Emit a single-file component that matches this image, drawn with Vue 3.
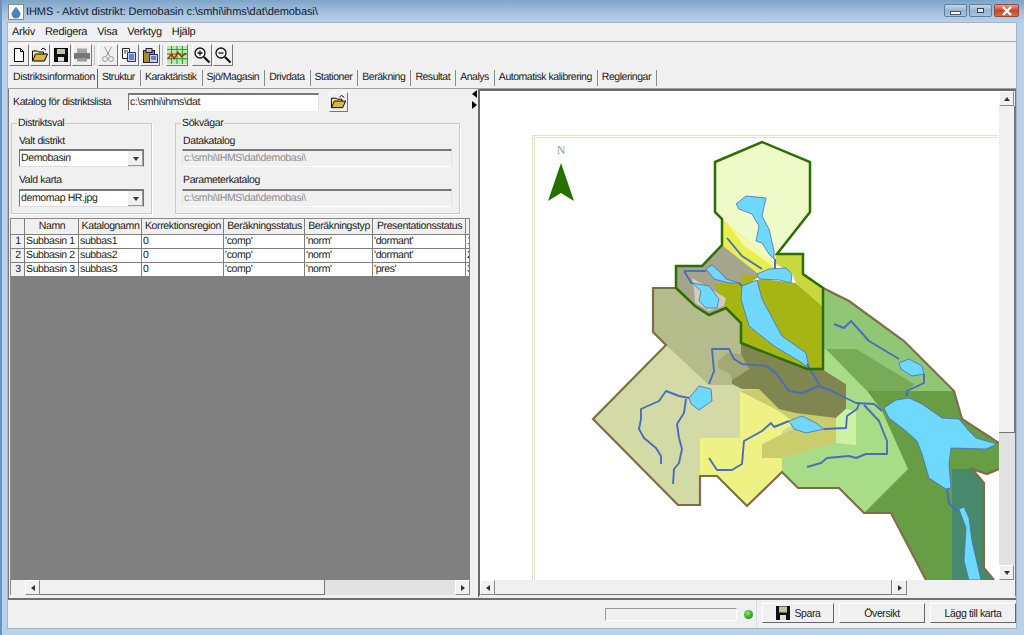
<script setup>
const menus = ['Arkiv', 'Redigera', 'Visa', 'Verktyg', 'Hjälp']
const tabs = ['Struktur', 'Karaktäristik', 'Sjö/Magasin', 'Drivdata', 'Stationer', 'Beräkning', 'Resultat', 'Analys', 'Automatisk kalibrering', 'Regleringar']
const columns = ['', 'Namn', 'Katalognamn', 'Korrektionsregion', 'Beräkningsstatus', 'Beräkningstyp', 'Presentationsstatus', '']
const rows = [
  ['1', 'Subbasin 1', 'subbas1', '0', "'comp'", "'norm'", "'dormant'", '1'],
  ['2', 'Subbasin 2', 'subbas2', '0', "'comp'", "'norm'", "'dormant'", '2'],
  ['3', 'Subbasin 3', 'subbas3', '0', "'comp'", "'norm'", "'pres'", '3']
]

// map areas, drawn back to front, in screen coordinates
const areas = [
  ['#d4daa6', '654,287 825,288 850,300 905,340 955,390 963,418 1000,442 1000,468 988,473 973,468 985,482 985,567 995,579 927,579 892,513 865,512 840,487 799,487 783,471 748,505 718,475 701,475 701,504 679,504 594,418 667,344 654,331'],
  ['#b5bc8c', '654,287 724,287 742,320 742,345 750,362 733,379 733,384 710,384 667,344 654,331'],
  ['#eef285', '741,390 780,410 800,420 783,430 783,471 748,505 718,475 701,475 701,437 741,437'],
  ['#cacd6c', '741,390 760,388 780,408 837,417 837,442 783,457 763,457 763,443 800,425 780,410'],
  ['#a3a874', '719,360 728,352 742,353 750,368 733,379 731,373 719,367'],
  ['#7f8650', '733,379 750,368 742,353 742,342 808,368 823,368 847,383 847,408 837,417 797,412 780,408 760,388 743,388 733,383'],
  ['#a9dc86', '825,340 867,390 883,410 909,468 865,512 840,487 799,487 783,471 783,457 837,442 837,417 847,408 847,383 825,368'],
  ['#cdf2a4', '837,417 847,408 857,410 857,444 837,442'],
  ['#8fc775', '825,288 850,300 905,340 955,390 868,390 827,348 825,348'],
  ['#77ab58', '827,348 857,348 915,383 910,390 868,390'],
  ['#679d45', '868,390 955,390 963,418 1000,442 1000,468 988,473 973,468 985,482 985,567 995,579 927,579 892,513 865,512 909,468 883,410'],
  ['#46896c', '953,468 973,468 985,482 985,567 995,579 953,579'],
  ['#eefbc9', '716,161 763,141 811,161 811,211 778,253 775,262 723,218 716,211'],
  ['#e9ef4c', '723,218 775,262 775,270 762,275 723,244'],
  ['#f4f7ac', '730,225 775,262 775,266 745,245'],
  ['#a5a58c', '723,244 762,275 745,285 727,307 710,314 696,305 677,287 677,265 703,265'],
  ['#a6b514', '715,283 745,283 762,278 797,282 824,306 824,368 808,368 742,342 742,322 727,307'],
  ['#a6b514', '742,273 757,275 752,283 742,282'],
  ['#c9d83c', '778,253 804,253 804,273 824,287 824,306 797,282 793,272 775,262'],
  ['#cfcfb8', '693,277 727,297 725,305 710,310 696,302 695,288']
]
const lakes = [
  '885,407 897,399 910,397 923,403 943,417 960,418 970,430 977,437 998,443 987,448 952,447 950,463 952,487 947,488 930,477 923,453 918,440 907,430 890,417',
  '960,508 965,506 970,517 973,540 982,579 970,579 965,560 967,527',
  '900,362 910,358 923,365 925,373 913,375 902,368',
  '790,420 803,415 817,422 825,428 807,432 795,428',
  '690,397 700,385 712,388 713,400 700,409 692,403',
  '737,203 747,195 767,197 763,215 770,228 775,250 775,258 770,253 763,242 757,240 760,225 753,213 740,208',
  '743,285 758,279 763,298 783,335 807,352 810,367 800,360 775,345 750,325 742,298',
  '758,273 770,268 787,267 793,273 792,282 780,279 760,278',
  '707,268 713,264 722,272 727,278 740,282 730,282 715,278',
  '693,282 710,285 720,298 718,307 707,307 700,300 702,290'
]
const rivers = [
  '690,397 680,395 667,390 660,400 642,408 642,418 640,428 645,437 657,447 662,455 662,463',
  '687,398 685,412 678,423 680,437 683,448 680,462 675,468 674,483',
  '710,383 715,370 713,348 730,348 735,358 743,363 767,365 777,372 790,390 803,392 820,385 833,390 857,402 875,403 883,410',
  '808,363 820,383',
  '710,457 718,469 733,469 743,463 745,440 763,430 772,422 775,426 790,420',
  '825,428 847,427 848,415 858,408 860,403',
  '865,404 880,420 888,440 888,453 867,453 857,457 850,455 828,457 822,462 808,466',
  '835,323 845,327 852,320 870,340 900,358',
  '925,373 925,382 908,390 908,395',
  '948,488 950,503 960,511',
  '728,237 743,255 763,268',
  '685,270 707,270',
  '685,270 693,283',
  '740,282 743,285',
  '776,258 776,268'
]
</script>

<template>
  <div class="window">
    <header class="titlebar">
      <svg class="app-icon" width="16" height="16" viewBox="0 0 16 16">
        <rect x="0.5" y="0.5" width="15" height="15" fill="#fff" stroke="#8a8a8a" />
        <path d="M8 2.500C6 6 3.500 7.500 3.500 10a4.500 4.500 0 0 0 9 0C12.500 7.500 10 6 8 2.500z" fill="#4d84bb" />
      </svg>
      <span class="title-text">IHMS - Aktivt distrikt: Demobasin c:\smhi\ihms\dat\demobasi\</span>
      <div class="caption-buttons">
        <div class="caption min"><i class="min-glyph"></i></div>
        <div class="caption max"><i class="max-glyph"></i></div>
        <div class="caption close">
          <svg width="12" height="10" viewBox="0 0 12 10"><path d="M2 1l8 8M10 1l-8 8" stroke="#fff" stroke-width="2.400" /></svg>
        </div>
      </div>
    </header>

    <div class="client">
      <nav class="menubar">
        <span v-for="m in menus" :key="m" class="menu">{{ m }}</span>
      </nav>

      <div class="toolbar">
        <button class="tool">
          <svg width="16" height="16" viewBox="0 0 16 16"><path d="M3.500 1.500h6l3 3v10h-9z" fill="#fff" stroke="#000" /><path d="M9.500 1.500v3h3" fill="none" stroke="#000" /></svg>
        </button>
        <button class="tool">
          <svg width="18" height="16" viewBox="0 0 18 16"><path d="M1.500 14V4h5l1 1h5v2" fill="#ffe680" stroke="#000" /><path d="M1.500 14l3-7h12l-3 7z" fill="#d8b840" stroke="#000" /><path d="M10 3l2-2 3 2" fill="none" stroke="#000" /></svg>
        </button>
        <button class="tool">
          <svg width="16" height="16" viewBox="0 0 16 16"><rect x="1.500" y="1.500" width="13" height="13" fill="#111" stroke="#000" /><rect x="4" y="2" width="8" height="5" fill="#b9c9a0" /><rect x="5" y="10" width="6" height="4.500" fill="#ddd" /></svg>
        </button>
        <button class="tool">
          <svg width="18" height="16" viewBox="0 0 18 16"><rect x="4" y="1.500" width="10" height="5" fill="#a5a5a5" /><rect x="1" y="6" width="16" height="6" rx="1" fill="#777" /><rect x="4" y="11" width="10" height="3.500" fill="#999" /></svg>
        </button>
        <i class="tool-sep"></i>
        <button class="tool">
          <svg width="14" height="18" viewBox="0 0 14 18"><path d="M3.500 1l5 9M10.500 1l-5 9" stroke="#9a9a9a" fill="none" /><circle cx="4" cy="13" r="2.500" fill="none" stroke="#9a9a9a" /><circle cx="10" cy="13" r="2.500" fill="none" stroke="#9a9a9a" /></svg>
        </button>
        <button class="tool">
          <svg width="16" height="16" viewBox="0 0 16 16"><path d="M1.500 1.500h7v10h-7z" fill="#fff" stroke="#222" /><path d="M6.500 5.500h8v9h-8z" fill="#c5cff0" stroke="#223080" /><path d="M3 4h4M3 6h2M8 8h5M8 10h5M8 12h5" stroke="#223080" /></svg>
        </button>
        <button class="tool">
          <svg width="17" height="17" viewBox="0 0 17 17"><rect x="1.500" y="3.500" width="11" height="12" fill="#a58a3c" stroke="#222" /><rect x="4" y="1.500" width="6" height="4" fill="#bbb" stroke="#222" /><rect x="7.500" y="7.500" width="8" height="8" fill="#c5cff0" stroke="#223080" /><path d="M9 10h5M9 12h5" stroke="#223080" /></svg>
        </button>
        <i class="tool-sep"></i>
        <button class="tool chart">
          <svg width="22" height="20" viewBox="0 0 22 20">
            <rect width="22" height="20" fill="#bfe7b0" />
            <path d="M0 4h22M0 9h22M0 14h22M5 0v20M11 0v20M17 0v20" stroke="#22a833" stroke-width="1.200" />
            <path d="M1 14l4-5 3 5 4-7 4 5 5-4" fill="none" stroke="#d81818" stroke-width="1.600" />
          </svg>
        </button>
        <button class="tool after-chart">
          <svg width="18" height="18" viewBox="0 0 18 18"><circle cx="7" cy="7" r="5" fill="#f2f2f2" stroke="#111" stroke-width="1.300" /><path d="M11 11l5.500 5.500" stroke="#111" stroke-width="2.200" /><path d="M4.500 7h5M7 4.500v5" stroke="#111" stroke-width="1.300" /></svg>
        </button>
        <button class="tool">
          <svg width="18" height="18" viewBox="0 0 18 18"><circle cx="7" cy="7" r="5" fill="#f2f2f2" stroke="#111" stroke-width="1.300" /><path d="M11 11l5.500 5.500" stroke="#111" stroke-width="2.200" /><path d="M4.500 7h5" stroke="#111" stroke-width="1.300" /></svg>
        </button>
      </div>

      <div class="tabstrip">
        <span class="tab active">Distriktsinformation</span>
        <span v-for="t in tabs" :key="t" class="tab">{{ t }}</span>
      </div>

      <main class="content">
        <section class="left">
          <div class="catalog-row">
            <label class="catalog-label">Katalog för distriktslista</label>
            <div class="sunken catalog-input">c:\smhi\ihms\dat</div>
            <button class="tool browse">
              <svg width="18" height="16" viewBox="0 0 18 16"><path d="M1.500 14V4h5l1 1h5v2" fill="#ffe680" stroke="#000" /><path d="M1.500 14l3-7h12l-3 7z" fill="#d8b840" stroke="#000" /><path d="M10 3l2-2 3 2" fill="none" stroke="#000" /></svg>
            </button>
          </div>

          <div class="groups">
            <fieldset class="group district">
              <legend>Distriktsval</legend>
              <div class="field-label">Valt distrikt</div>
              <div class="sunken combo"><span>Demobasin</span><i class="combo-btn"><i class="arrow down"></i></i></div>
              <div class="field-label second">Vald karta</div>
              <div class="sunken combo"><span>demomap HR.jpg</span><i class="combo-btn"><i class="arrow down"></i></i></div>
            </fieldset>
            <fieldset class="group paths">
              <legend>Sökvägar</legend>
              <div class="field-label">Datakatalog</div>
              <div class="sunken disabled">c:\smhi\IHMS\dat\demobasi\</div>
              <div class="field-label second">Parameterkatalog</div>
              <div class="sunken disabled">c:\smhi\IHMS\dat\demobasi\</div>
            </fieldset>
          </div>

          <div class="grid">
            <div class="grid-row head">
              <div v-for="(c, i) in columns" :key="i" class="cell">{{ c }}</div>
            </div>
            <div v-for="r in rows" :key="r[0]" class="grid-row">
              <div v-for="(c, i) in r" :key="i" class="cell" :class="{ rowhead: i === 0 }">{{ c }}</div>
            </div>
            <div class="grid-empty"></div>
            <div class="grid-scroll">
              <div class="corner"></div>
              <div class="hscroll">
                <i class="sbtn"><i class="arrow left-a"></i></i>
                <div class="thumb" style="width: 285px"></div>
                <div class="track"></div>
                <i class="sbtn"><i class="arrow right-a"></i></i>
              </div>
            </div>
          </div>
        </section>

        <div class="splitter">
          <i class="split-arrow to-left"></i>
          <i class="split-arrow to-right"></i>
        </div>

        <section class="map-pane">
          <div class="map-top">
            <svg class="map" width="519" height="489" viewBox="481 90 519 489">
              <rect x="481" y="90" width="519" height="489" fill="#fff" />
              <path d="M1000 134.500H533.500V579M1000 136.500H535.500V579" fill="none" stroke="#e2e2cf" stroke-width="1.200" />
              <text x="562" y="153" text-anchor="middle" class="north">N</text>
              <polygon points="562,162 575,200 562,192 549,200" fill="#267000" />
              <polygon v-for="(a, i) in areas" :key="i" :points="a[1]" :fill="a[0]" />
              <path d="M677 287H654V331L667 344L594 418L679 504H701V475H718L748 505L783 471L799 487H840L865 512H892L927 579M995 579L985 567V482L973 468L988 473L1000 468M1000 442L963 418L955 390L905 340L850 300L824 287" fill="none" stroke="#7d6e4a" stroke-width="2.200" />
              <polygon v-for="(l, i) in lakes" :key="'l' + i" :points="l" fill="#6fd8ff" stroke="#4a6cc0" stroke-width="0.800" stroke-linejoin="round" />
              <polyline v-for="(r, i) in rivers" :key="'r' + i" :points="r" fill="none" stroke="#4a6cc0" stroke-width="1.900" stroke-linejoin="round" />
              <polygon points="716,161 763,141 811,161 811,211 778,253 804,253 804,273 824,287 824,368 808,368 742,342 742,322 727,307 710,314 696,305 677,287 677,265 703,265 723,244 723,218 716,211" fill="none" stroke="#2c6e00" stroke-width="2.500" />
            </svg>
            <div class="vscroll">
              <i class="sbtn"><i class="arrow up"></i></i>
              <div class="thumb v-thumb"></div>
              <div class="track"></div>
              <i class="sbtn"><i class="arrow down"></i></i>
            </div>
          </div>
          <div class="map-bottom">
            <div class="hscroll">
              <i class="sbtn"><i class="arrow left-a"></i></i>
              <div class="thumb"></div>
              <div class="track map-track"></div>
              <i class="sbtn"><i class="arrow right-a"></i></i>
            </div>
            <div class="scroll-corner"></div>
          </div>
        </section>
      </main>

      <footer class="statusbar">
        <div class="status-left">
          <div class="progress"></div>
          <i class="led"></i>
        </div>
        <div class="status-buttons">
          <button class="push save">
            <svg width="16" height="16" viewBox="0 0 16 16"><rect x="1" y="1" width="14" height="14" fill="#111" /><rect x="4" y="1.500" width="8" height="6" fill="#b9c9a0" /><rect x="5" y="10" width="6" height="5" fill="#ddd" /></svg>
            Spara
          </button>
          <button class="push wide">Översikt</button>
          <button class="push wide">Lägg till karta</button>
        </div>
      </footer>
    </div>
  </div>
</template>

<style scoped>
.window {
  width: 1024px;
  height: 635px;
  box-sizing: border-box;
  overflow: hidden;
  display: flex;
  flex-direction: column;
  background: #b9d1ea;
  border-left: 2px solid #6c93bd;
  font-family: "Liberation Sans", Arial, sans-serif;
  font-size: 10.500px;
  letter-spacing: -0.37px;
  text-rendering: geometricPrecision;
  color: #1a1a1a;
}
.titlebar {
  height: 23px;
  flex: none;
  margin-left: -2px;
  padding-left: 8px;
  display: flex;
  align-items: center;
  background: linear-gradient(#7ea4c9, #a8c3de 60%, #bad1e8);
}
.app-icon {
  margin-right: 2px;
}
.title-text {
  font-size: 11px;
  letter-spacing: -0.08px;
  color: #10202c;
}
.caption-buttons {
  margin-left: auto;
  margin-right: 5px;
  margin-top: -2px;
  display: flex;
  gap: 2px;
}
.caption {
  height: 13px;
  width: 23px;
  box-sizing: border-box;
  border: 1px solid #5f7f9f;
  border-radius: 2px;
  display: flex;
  align-items: center;
  justify-content: center;
  background: linear-gradient(#c6d9ea, #97b5d0 50%, #a8c4dd);
}
.caption.close {
  width: 25px;
  background: linear-gradient(#e4a08a, #c9452d 50%, #d7694e);
  border-color: #8f4a3c;
}
.min-glyph {
  width: 9px;
  height: 2px;
  margin-top: 5px;
  background: #fff;
  outline: 1px solid #44596d;
}
.max-glyph {
  width: 7px;
  height: 5px;
  box-sizing: border-box;
  border: 1.500px solid #33475a;
  background: #dbe7f1;
}
.client {
  flex: 1;
  margin: 0 8px 7px 6px;
  min-height: 0;
  background: #f0f0f0;
  display: flex;
  flex-direction: column;
  box-shadow: 0 0 0 1px #a0b5ca;
}
.menubar {
  height: 19px;
  flex: none;
  padding-left: 4px;
  display: flex;
  gap: 10px;
  align-items: center;
  border-bottom: 1px solid #a8a8a8;
  box-sizing: border-box;
}
.menu {
  font-size: 11px;
  letter-spacing: -0.3px;
}
.toolbar {
  height: 26px;
  flex: none;
  padding: 2px 0 2px 1px;
  box-sizing: border-box;
  display: flex;
  align-items: stretch;
  gap: 1px;
}
.tool {
  width: 20px;
  height: 22px;
  padding: 0;
  box-sizing: border-box;
  background: #f0f0f0;
  border: 1px solid;
  border-color: #fff #777 #777 #fff;
  display: flex;
  align-items: center;
  justify-content: center;
}
.tool.chart {
  width: 22px;
}
.tool.after-chart {
  margin-left: 3px;
}
.tool-sep {
  width: 1px;
  margin: 1px 2px 1px 1px;
  background: #c0c0c0;
}
.tabstrip {
  height: 20px;
  flex: none;
  padding-left: 2px;
  display: flex;
  align-items: flex-end;
}
.tab {
  padding: 0 5px 0 4px;
  height: 16px;
  line-height: 15px;
  margin-bottom: 2px;
  border-right: 1px solid #888;
  letter-spacing: -0.47px;
  white-space: nowrap;
}
.tab.active {
  height: 19px;
  line-height: 17px;
  margin-bottom: 0;
  border-right: 1px solid #666;
  padding: 0 2px 0 3px;
  letter-spacing: -0.37px;
}
.content {
  flex: 1;
  min-height: 0;
  display: flex;
  border-top: 1px solid #a0a0a0;
}
.left {
  width: 463px;
  flex: none;
  display: flex;
  flex-direction: column;
  padding: 0 0 3px 1px;
  border-left: 1px solid #7a7a7a;
  box-sizing: border-box;
}
.catalog-row {
  height: 28px;
  flex: none;
  display: flex;
  align-items: center;
  padding-left: 3px;
}
.catalog-label {
  width: 115px;
  flex: none;
  margin-top: -2px;
}
.sunken {
  box-sizing: border-box;
  background: #fff;
  border: 1px solid;
  border-color: #777 #e0e0e0 #fff #777;
  border-width: 2px 1px 1px 1px;
  height: 18px;
  line-height: 15px;
  padding-left: 1px;
}
.catalog-input {
  width: 191px;
  margin-right: 10px;
  margin-top: -3px;
}
.browse {
  width: 19px;
  height: 20px;
  margin-top: -3px;
}
.groups {
  height: 101px;
  flex: none;
  display: flex;
  align-items: flex-start;
  padding-left: 1px;
  gap: 23px;
}
.group {
  margin: 0;
  box-sizing: border-box;
  height: 97px;
  padding: 0 7px;
  border: 1px solid #c9c9c9;
  box-shadow: 1px 1px 0 #fff;
}
.group legend {
  padding: 0 1px;
  margin-left: -2px;
  line-height: 12px;
}
.district {
  width: 141px;
}
.paths {
  width: 285px;
}
.field-label {
  height: 14px;
  line-height: 14px;
  margin-top: 5px;
}
.field-label.second {
  margin-top: 6px;
}
.combo {
  display: flex;
  align-items: center;
  justify-content: space-between;
  margin-top: 1px;
  width: 125px;
  height: 18px;
  border-color: #777 #777 #ddd #777;
}
.combo-btn {
  width: 15px;
  height: 15px;
  display: flex;
  align-items: center;
  justify-content: center;
  background: #f0f0f0;
  border-left: 1px solid #fff;
  box-shadow: inset -1px -1px 0 #999;
}
.disabled {
  margin-top: 1px;
  margin-left: -1px;
  background: #f0f0f0;
  color: #8d8d8d;
  width: 270px;
  border-color: #777 #e4e4e4 #fff #e4e4e4;
}
.field-label.second + .sunken {
  margin-top: 2px;
}
.arrow {
  width: 0;
  height: 0;
  display: block;
  border: 3px solid transparent;
}
.arrow.down {
  border-top: 4px solid #333;
  border-bottom: 0;
}
.arrow.up {
  border-bottom: 4px solid #333;
  border-top: 0;
}
.arrow.left-a {
  border-right: 4px solid #333;
  border-left: 0;
}
.arrow.right-a {
  border-left: 4px solid #333;
  border-right: 0;
}
.grid {
  flex: 1;
  min-height: 0;
  width: 460px;
  display: flex;
  flex-direction: column;
  border-top: 1px solid #888;
  border-left: 1px solid #888;
  box-sizing: border-box;
}
.grid-row {
  flex: none;
  height: 14px;
  display: grid;
  grid-template-columns: 14px 54px 63px 82px 81px 68px 93px 1fr;
  background: #fff;
  overflow: hidden;
}
.grid-row.head {
  height: 16px;
  background: #f0f0f0;
}
.cell {
  box-sizing: border-box;
  border-right: 1px solid #7f7f7f;
  border-bottom: 1px solid #7f7f7f;
  padding-left: 1px;
  line-height: 13px;
  white-space: nowrap;
  overflow: hidden;
}
.head .cell {
  text-align: center;
  line-height: 15px;
}
.rowhead {
  background: #f0f0f0;
  text-align: center;
}
.grid-empty {
  flex: 1;
  background: #808080;
}
.grid-scroll {
  height: 15px;
  flex: none;
  display: flex;
}
.corner {
  width: 14px;
  background: #f0f0f0;
}
.hscroll {
  flex: 1;
  display: flex;
  height: 15px;
}
.sbtn {
  width: 15px;
  height: 15px;
  flex: none;
  box-sizing: border-box;
  display: flex;
  align-items: center;
  justify-content: center;
  background: #f0f0f0;
  border: 1px solid;
  border-color: #fff #888 #888 #fff;
}
.thumb {
  flex: none;
  box-sizing: border-box;
  background: #f0f0f0;
  border-right: 1px solid #777;
  border-bottom: 1px solid #777;
}
.track {
  flex: 1;
  background: #e2e2e2;
}
.splitter {
  width: 7px;
  flex: none;
  padding-top: 1px;
}
.split-arrow {
  display: block;
  width: 0;
  height: 0;
  margin-bottom: 3px;
  border: 4px solid transparent;
}
.to-left {
  border-right: 5px solid #000;
  border-left: 0;
  margin-left: 1px;
}
.to-right {
  border-left: 5px solid #000;
  border-right: 0;
  margin-left: 1px;
}
.map-pane {
  flex: 1;
  min-width: 0;
  display: flex;
  flex-direction: column;
  border-top: 2px solid #696969;
  border-left: 2px solid #696969;
  border-right: 1px solid #777;
  border-bottom: 3px solid #f0f0f0;
  box-sizing: border-box;
}
.map-top {
  flex: 1;
  min-height: 0;
  display: flex;
}
.map {
  display: block;
  flex: none;
}
.north {
  font-family: "Liberation Serif", serif;
  font-size: 12px;
  fill: #8e9a86;
}
.vscroll {
  flex: 1;
  display: flex;
  flex-direction: column;
}
.v-thumb {
  height: 327px;
  border-bottom: 1px solid #777;
}
.map-bottom {
  height: 15px;
  flex: none;
  display: flex;
}
.map-bottom .thumb {
  width: 397px;
}
.scroll-corner {
  flex: 1;
  background: #f0f0f0;
}
.statusbar {
  height: 30px;
  flex: none;
  display: flex;
  border-top: 2px solid #6f6f6f;
  box-sizing: border-box;
}
.status-left {
  width: 749px;
  flex: none;
  display: flex;
  align-items: center;
  justify-content: flex-end;
  gap: 7px;
  padding-right: 3px;
  box-sizing: border-box;
  border-right: 1px solid #dcdcdc;
}
.progress {
  width: 132px;
  height: 13px;
  box-sizing: border-box;
  border: 1px solid;
  border-color: #9a9a9a #fff #fff #9a9a9a;
}
.led {
  width: 9px;
  height: 9px;
  border-radius: 50%;
  background: radial-gradient(circle at 40% 35%, #8fe86a, #1c9a1c 70%);
}
.status-buttons {
  flex: 1;
  display: flex;
  gap: 5px;
  align-items: center;
  padding-left: 5px;
  padding-bottom: 2px;
}
.push {
  height: 20px;
  width: 86px;
  box-sizing: border-box;
  background: #f0f0f0;
  border: 1px solid;
  border-color: #fff #666 #666 #fff;
  font: inherit;
  letter-spacing: inherit;
  color: inherit;
  display: flex;
  align-items: center;
  justify-content: center;
  gap: 3px;
  padding: 0;
}
.push.save {
  width: 72px;
}
</style>

<style>
html, body {
  margin: 0;
  overflow: hidden;
}
</style>
